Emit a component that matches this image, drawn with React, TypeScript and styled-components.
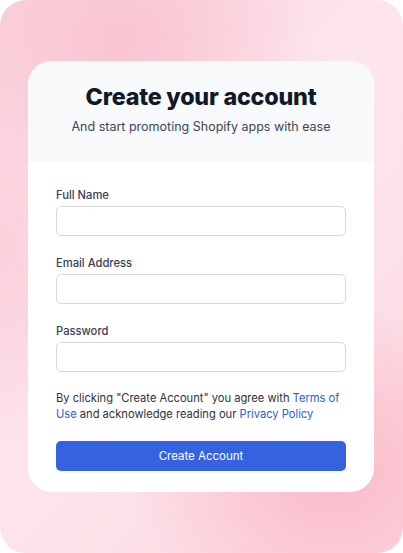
import React from 'react';
import styled, { createGlobalStyle } from 'styled-components';

const GlobalStyle = createGlobalStyle`
  html, body {
    margin: 0;
    padding: 0;
    background: #ffffff;
  }
  * {
    box-sizing: border-box;
  }
`;

const Backdrop = styled.div`
  width: 403px;
  height: 553px;
  border-radius: 26px;
  overflow: hidden;
  display: flex;
  align-items: flex-start;
  padding: 61px 0 0 28px;
  font-family: Inter, 'Noto Sans', sans-serif;
  background:
    radial-gradient(ellipse 190px 150px at 120px 40px, #f8c3d0 0%, rgba(248, 195, 208, 0) 100%),
    radial-gradient(ellipse 200px 170px at 330px 470px, #fab9c7 0%, rgba(250, 185, 199, 0) 100%),
    radial-gradient(ellipse 150px 220px at 0px 250px, #fad0db 0%, rgba(250, 208, 219, 0) 100%),
    linear-gradient(135deg, #fbd3dd 0%, #fde6ec 45%, #fcd9e1 100%);
`;

const Card = styled.div`
  width: 346px;
  background: #ffffff;
  border-radius: 24px;
  overflow: hidden;
`;

const Header = styled.header`
  background: #f8f9fb;
  padding: 20px 16px 25px;
  text-align: center;
`;

const Title = styled.h1`
  margin: 0;
  font-size: 23.3px;
  line-height: 32px;
  font-weight: 800;
  color: #111827;
  letter-spacing: -0.2px;
`;

const Subtitle = styled.p`
  margin: 4px 0 0;
  font-size: 12.5px;
  line-height: 20px;
  color: #3f4651;
`;

const Form = styled.form`
  padding: 25px 28px 21px;
  display: flex;
  flex-direction: column;
`;

const Field = styled.div`
  display: flex;
  flex-direction: column;
  margin-bottom: 19px;
`;

const Label = styled.label`
  font-size: 11.2px;
  line-height: 16px;
  font-weight: 500;
  color: #374151;
  margin-bottom: 3px;
`;

const Input = styled.input`
  height: 30px;
  width: 100%;
  border: 1px solid #d6d8dc;
  border-radius: 5px;
  background: #ffffff;
  padding: 0 10px;
  font-family: inherit;
  font-size: 12px;
  outline: none;
`;

const Terms = styled.p`
  margin: -1px 0 19px;
  font-size: 11.15px;
  line-height: 16px;
  color: #2b313b;
`;

const Link = styled.a`
  color: #2d5bd6;
  text-decoration: none;
`;

const Submit = styled.button`
  height: 30px;
  width: 100%;
  border: none;
  border-radius: 5px;
  background: #3563df;
  color: #ffffff;
  font-family: inherit;
  font-size: 11.5px;
  font-weight: 400;
  cursor: pointer;
`;

const fields = [
  { id: 'name', label: 'Full Name', type: 'text' },
  { id: 'email', label: 'Email Address', type: 'email' },
  { id: 'password', label: 'Password', type: 'password' },
];

const App: React.FC = () => {
  return (
    <>
      <GlobalStyle />
      <Backdrop>
        <Card>
          <Header>
            <Title>Create your account</Title>
            <Subtitle>And start promoting Shopify apps with ease</Subtitle>
          </Header>
          <Form onSubmit={(e) => e.preventDefault()}>
            {fields.map((f) => (
              <Field key={f.id}>
                <Label htmlFor={f.id}>{f.label}</Label>
                <Input id={f.id} type={f.type} />
              </Field>
            ))}
            <Terms>
              By clicking "Create Account" you agree with <Link href="#">Terms of Use</Link> and
              acknowledge reading our <Link href="#">Privacy Policy</Link>
            </Terms>
            <Submit type="submit">Create Account</Submit>
          </Form>
        </Card>
      </Backdrop>
    </>
  );
};

export default App;
